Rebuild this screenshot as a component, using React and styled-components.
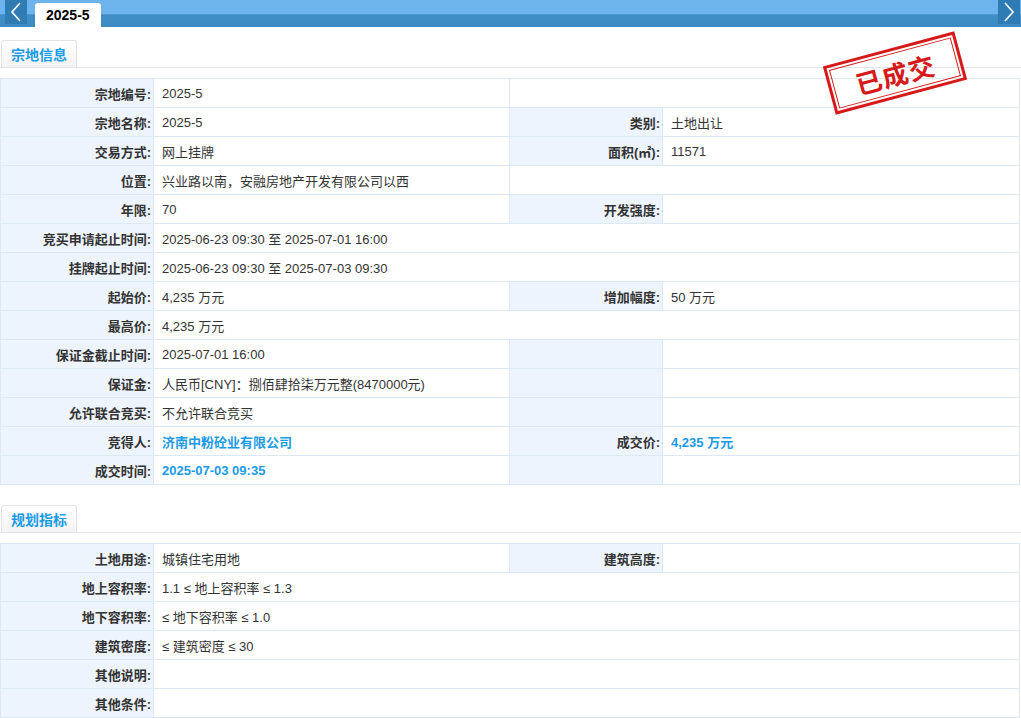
import React from "react";
import styled, { createGlobalStyle } from "styled-components";

const Global = createGlobalStyle`
  body { margin: 0; font-family: "Liberation Sans", "Noto Sans CJK SC", sans-serif; font-size: 13px; color: #333; background: #fff; }
`;
const Page = styled.div` position: relative; width: 1021px; `;
const TopBar = styled.div`
  height: 27px; display: flex; align-items: flex-end; justify-content: space-between;
  background: linear-gradient(#6db3ec, #6db3ec 50%, #3f8fc6 55%, #3a8bc2);
`;
const Arrow = styled.div`
  width: 22px; height: 24px; margin-bottom: 3px; background: #2f7bb4; display: flex; align-items: center; justify-content: center;
  ${p => p.$left ? "margin-left: 5px;" : "margin-right: 1px;"}
`;
const TabsLeft = styled.div` display: flex; align-items: flex-end; height: 100%; `;
const ActiveTab = styled.div`
  margin-left: 8px; height: 24px; padding: 0 11px; background: #fff; border-radius: 3px 3px 0 0;
  font-weight: bold; font-size: 14px; color: #000; display: flex; align-items: center;
`;
const SectionHead = styled.div`
  margin-top: ${p => p.$mt}px; border-bottom: 1px solid #dfe3e8; height: 27px; display: flex; align-items: flex-end;
`;
const SectionTab = styled.div`
  margin-left: 1px; height: 26px; width: 74px; border: 1px solid #e2e2e2; border-bottom: none; border-radius: 3px 3px 0 0;
  background: linear-gradient(#fff, #f3f3f3); color: #1a9be6; font-weight: bold; font-size: 14px;
  display: flex; align-items: center; justify-content: center;
`;
const Table = styled.table`
  margin-top: 10px; width: 1019px; border-collapse: collapse; table-layout: fixed;
  border: 1px solid #d9e6f5;
`;
const L = styled.td`
  background: #eef4fd; text-align: right; font-weight: bold; color: #333; height: 28px; padding: 0 2px 0 0;
  border: 1px solid #dde8f5; white-space: nowrap;
`;
const V = styled.td`
  background: #fff; height: 28px; padding: 0 0 0 8px; border: 1px solid #dde8f5; white-space: nowrap;
  ${p => p.$hl && "color: #1a9be6; font-weight: bold;"}
`;
const Stamp = styled.div`
  position: absolute; left: 827px; top: 48px; width: 136px; height: 50px; transform: rotate(-15deg);
  border: 3px solid #d61a1a; padding: 2px; box-sizing: border-box;
`;
const StampInner = styled.div`
  width: 100%; height: 100%; border: 1px solid #d61a1a; box-sizing: border-box; display: flex; align-items: center; justify-content: center;
  color: #d61a1a; font-size: 26px; font-weight: bold; font-family: "Noto Sans CJK SC", sans-serif; letter-spacing: 1px;
`;
const Chevron = ({ left }) => (
  <svg width="12" height="20" viewBox="0 0 12 20"><path d={left ? "M10 1 L2 10 L10 19" : "M2 1 L10 10 L2 19"} stroke="#fff" strokeWidth="1.6" fill="none" /></svg>
);

const Row = ({ cells }) => (
  <tr>{cells.map((c, i) => c.l !== undefined
    ? <L key={i} colSpan={c.span}>{c.l}</L>
    : <V key={i} colSpan={c.span} $hl={c.hl}>{c.v}</V>)}</tr>
);
const Cols = () => (<colgroup><col width="153" /><col width="356" /><col width="153" /><col width="357" /></colgroup>);

const t1 = [
  [{ l: "宗地编号:" }, { v: "2025-5" }, { v: "", span: 2 }],
  [{ l: "宗地名称:" }, { v: "2025-5" }, { l: "类别:" }, { v: "土地出让" }],
  [{ l: "交易方式:" }, { v: "网上挂牌" }, { l: "面积(㎡):" }, { v: "11571" }],
  [{ l: "位置:" }, { v: "兴业路以南，安融房地产开发有限公司以西" }, { v: "", span: 2 }],
  [{ l: "年限:" }, { v: "70" }, { l: "开发强度:" }, { v: "" }],
  [{ l: "竞买申请起止时间:" }, { v: "2025-06-23 09:30 至 2025-07-01 16:00", span: 3 }],
  [{ l: "挂牌起止时间:" }, { v: "2025-06-23 09:30 至 2025-07-03 09:30", span: 3 }],
  [{ l: "起始价:" }, { v: "4,235 万元" }, { l: "增加幅度:" }, { v: "50 万元" }],
  [{ l: "最高价:" }, { v: "4,235 万元", span: 3 }],
  [{ l: "保证金截止时间:" }, { v: "2025-07-01 16:00" }, { l: "" }, { v: "" }],
  [{ l: "保证金:" }, { v: "人民币[CNY]：捌佰肆拾柒万元整(8470000元)" }, { l: "" }, { v: "" }],
  [{ l: "允许联合竞买:" }, { v: "不允许联合竞买" }, { l: "" }, { v: "" }],
  [{ l: "竞得人:" }, { v: "济南中粉砼业有限公司", hl: true }, { l: "成交价:" }, { v: "4,235 万元", hl: true }],
  [{ l: "成交时间:" }, { v: "2025-07-03 09:35", hl: true }, { l: "" }, { v: "" }],
];
const t2 = [
  [{ l: "土地用途:" }, { v: "城镇住宅用地" }, { l: "建筑高度:" }, { v: "" }],
  [{ l: "地上容积率:" }, { v: "1.1 ≤ 地上容积率 ≤ 1.3", span: 3 }],
  [{ l: "地下容积率:" }, { v: "≤ 地下容积率 ≤ 1.0", span: 3 }],
  [{ l: "建筑密度:" }, { v: "≤ 建筑密度 ≤ 30", span: 3 }],
  [{ l: "其他说明:" }, { v: "", span: 3 }],
  [{ l: "其他条件:" }, { v: "", span: 3 }],
];

export default function App() {
  return (
    <Page>
      <Global />
      <TopBar>
        <TabsLeft>
          <Arrow $left><Chevron left /></Arrow>
          <ActiveTab>2025-5</ActiveTab>
        </TabsLeft>
        <Arrow><Chevron /></Arrow>
      </TopBar>
      <SectionHead $mt={13}><SectionTab>宗地信息</SectionTab></SectionHead>
      <Table><Cols /><tbody>{t1.map((r, i) => <Row key={i} cells={r} />)}</tbody></Table>
      <SectionHead $mt={20}><SectionTab>规划指标</SectionTab></SectionHead>
      <Table><Cols /><tbody>{t2.map((r, i) => <Row key={i} cells={r} />)}</tbody></Table>
      <Stamp><StampInner>已成交</StampInner></Stamp>
    </Page>
  );
}
